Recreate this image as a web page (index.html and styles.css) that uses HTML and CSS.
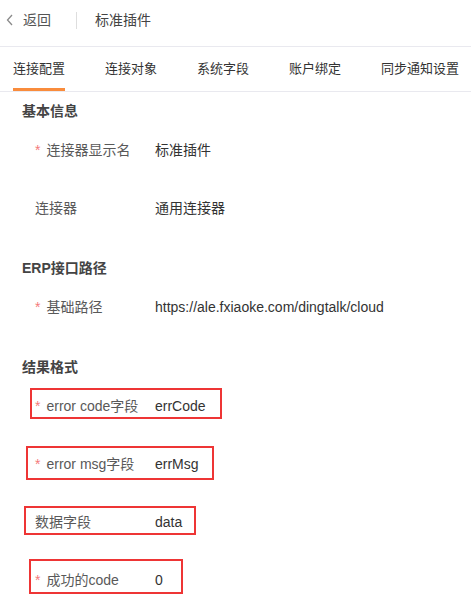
FILE: index.html
```html
<!DOCTYPE html>
<html lang="zh-CN">
<head>
<meta charset="utf-8">
<title>标准插件</title>
<link rel="stylesheet" href="styles.css">
</head>
<body>
<div class="page">
  <header class="header">
    <a class="back">
      <svg class="chev" width="8" height="12" viewBox="0 0 8 12"><path d="M6 1 L1.5 6 L6 11" fill="none" stroke="#8a8a8a" stroke-width="1.3"/></svg>
      <span>返回</span>
    </a>
    <span class="divider"></span>
    <span class="title">标准插件</span>
  </header>
  <nav class="tabs">
    <span class="tab active">连接配置</span>
    <span class="tab">连接对象</span>
    <span class="tab">系统字段</span>
    <span class="tab">账户绑定</span>
    <span class="tab">同步通知设置</span>
  </nav>
  <main class="content">
    <section class="section">
      <h3 class="sec-title">基本信息</h3>
      <div class="row"><span class="label"><i class="req">*</i>连接器显示名</span><span class="value">标准插件</span></div>
      <div class="row"><span class="label">连接器</span><span class="value">通用连接器</span></div>
    </section>
    <section class="section">
      <h3 class="sec-title">ERP接口路径</h3>
      <div class="row"><span class="label"><i class="req">*</i>基础路径</span><span class="value latin">https://ale.fxiaoke.com/dingtalk/cloud</span></div>
    </section>
    <section class="section">
      <h3 class="sec-title">结果格式</h3>
      <div class="row"><span class="mark mark-1"></span><span class="label"><i class="req">*</i><span class="latin">error code</span>字段</span><span class="value latin">errCode</span></div>
      <div class="row"><span class="mark mark-2"></span><span class="label"><i class="req">*</i><span class="latin">error msg</span>字段</span><span class="value latin">errMsg</span></div>
      <div class="row"><span class="mark mark-3"></span><span class="label">数据字段</span><span class="value latin">data</span></div>
      <div class="row"><span class="mark mark-4"></span><span class="label"><i class="req">*</i>成功的<span class="latin">code</span></span><span class="value latin">0</span></div>
    </section>
  </main>
</div>
</body>
</html>
```

FILE: styles.css
```css
* { box-sizing: border-box; }
html, body { margin: 0; padding: 0; background: #fff; }
body {
  font-family: "Liberation Sans", "Noto Sans CJK SC", sans-serif;
  font-size: 14px;
  color: #333;
}
.page { width: 471px; height: 598px; overflow: hidden; }

.header {
  height: 47px;
  border-bottom: 1px solid #e9e9ef;
  display: flex;
  align-items: flex-start;
  padding-top: 10px;
  line-height: 20px;
}
.back {
  display: flex;
  align-items: center;
  color: #555;
  padding-left: 6px;
}
.chev { margin-right: 9px; }
.divider {
  width: 1px;
  height: 17px;
  background: #dedede;
  margin: 2px 0 0 25px;
}
.title { margin-left: 18px; color: #444; }

.tabs {
  display: flex;
  gap: 40px;
  padding-left: 13px;
  height: 45px;
  border-bottom: 1px solid #e9e9ef;
  white-space: nowrap;
  font-size: 13px;
}
.tab {
  height: 44px;
  padding-top: 12px;
  line-height: 20px;
  color: #333;
}
.tab.active { border-bottom: 3px solid #f98c3c; }

.content { padding-top: 9px; }
.section { margin-bottom: 21px; }
.sec-title {
  margin: 0;
  padding-left: 22px;
  font-size: 14px;
  line-height: 20px;
  font-weight: bold;
  color: #444;
}
.row {
  position: relative;
  height: 58px;
  display: flex;
  align-items: center;
  padding-left: 35px;
  line-height: 20px;
}
.label { width: 120px; color: #595959; flex: none; }
.req {
  font-style: normal;
  color: #f47a7a;
  margin-right: 6px;
}
.value { color: #333; }
.latin { font-family: "Liberation Sans", Arial, sans-serif; }

.mark {
  position: absolute;
  border: 2px solid #ee3535;
  pointer-events: none;
}
.mark-1 { left: 30px; top: 11px; width: 192px; height: 31px; }
.mark-2 { left: 26px; top: 11px; width: 188px; height: 34px; }
.mark-3 { left: 24px; top: 13px; width: 172px; height: 29px; }
.mark-4 { left: 29px; top: 8px; width: 154px; height: 35px; }
```
